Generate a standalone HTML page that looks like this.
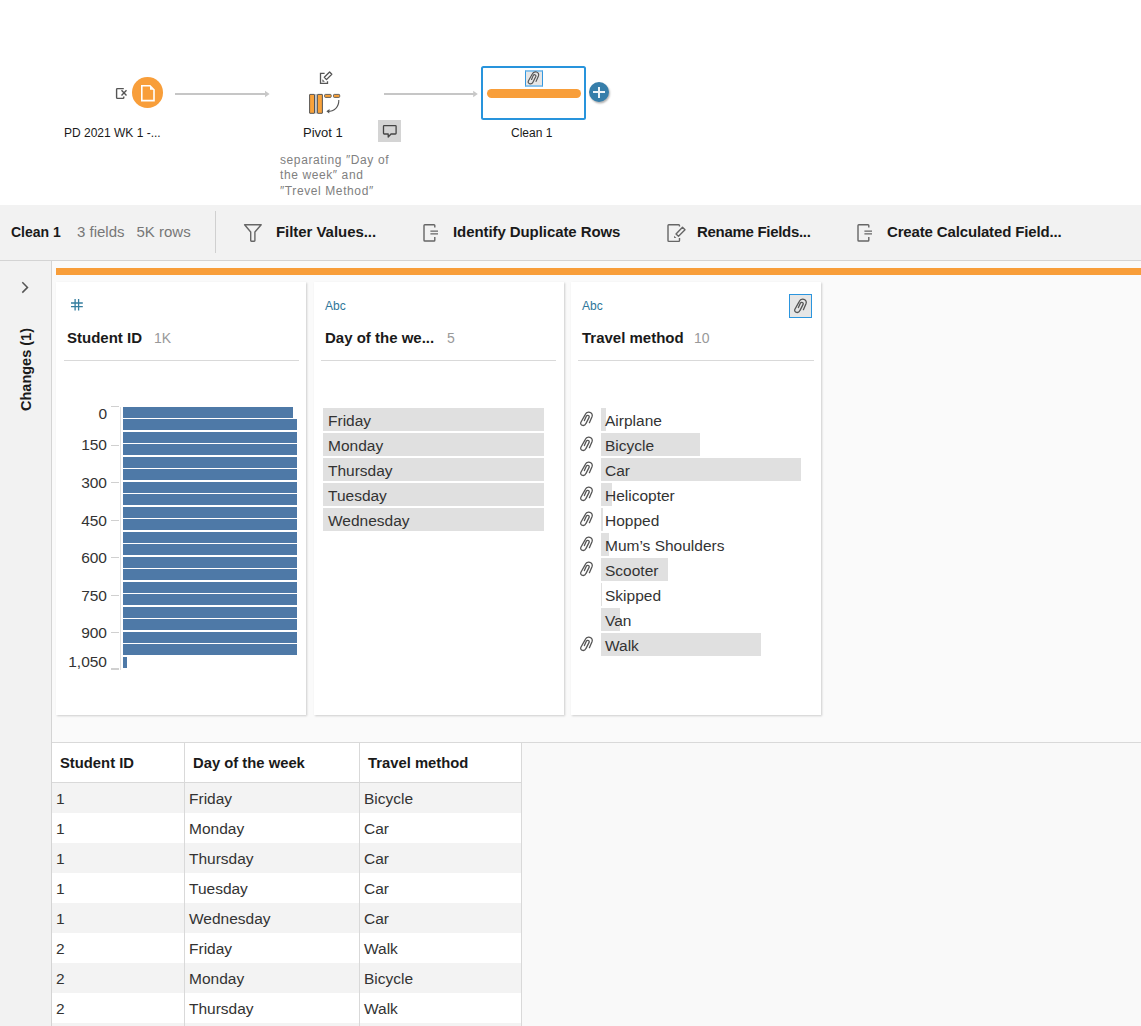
<!DOCTYPE html>
<html><head><meta charset="utf-8"><style>
html,body{margin:0;padding:0;width:1141px;height:1026px;overflow:hidden;background:#fff;position:relative;font-family:"Liberation Sans", sans-serif;}
.a{position:absolute;box-sizing:border-box;}
svg.a{overflow:visible}
.t{position:absolute;white-space:pre;font-family:"Liberation Sans", sans-serif;}
</style></head><body>
<div class="a" style="left:0px;top:0px;width:1141px;height:205px;background:#fff"></div>
<div class="a" style="left:0px;top:205px;width:1141px;height:55px;background:#f2f2f2"></div>
<div class="a" style="left:0px;top:260px;width:1141px;height:1px;background:#d4d4d4"></div>
<div class="a" style="left:0px;top:261px;width:51px;height:765px;background:#f2f2f2"></div>
<div class="a" style="left:51px;top:261px;width:1px;height:765px;background:#d4d4d4"></div>
<div class="a" style="left:52px;top:261px;width:1089px;height:481px;background:#fafafa"></div>
<div class="a" style="left:52px;top:742px;width:1089px;height:1px;background:#d9d9d9"></div>
<div class="a" style="left:52px;top:743px;width:1089px;height:283px;background:#f9f9f9"></div>
<svg class="a" style="left:112px;top:83px" width="20" height="20" viewBox="0 0 20 20"><path d="M11.8 5.6 H5.5 Q4.6 5.6 4.6 6.5 V14.5 Q4.6 15.4 5.5 15.4 H11 Q11.8 15.4 11.8 14.6 V13.6" fill="none" stroke="#555" stroke-width="1.4"/><path d="M9.5 7.3 L14.5 12.4 M14.5 7.3 L9.5 12.4" stroke="#555" stroke-width="1.4"/></svg>
<div class="a" style="left:131.5px;top:77.3px;width:31.6px;height:31.2px;background:#f89e3a;border-radius:50%"></div>
<svg class="a" style="left:140px;top:84px" width="16" height="18" viewBox="0 0 16 18"><path d="M1.8 1.8 H10 L14 5.8 V16.6 H1.8 Z" fill="none" stroke="#fff" stroke-width="1.6"/><path d="M10 1.8 L14 5.8 H10 Z" fill="#fff"/></svg>
<div class="a" style="left:175px;top:93px;width:91px;height:2px;background:#c6c6c6"></div>
<svg class="a" style="left:0;top:0" width="1" height="1"><path d="M265 90.8 L269.6 94 L265 97.2 Z" fill="#c8c8c8"/></svg>
<div class="t" style="left:64px;top:126.84px;font-size:12px;line-height:12px;font-weight:400;color:#1a1a1a;letter-spacing:0px;">PD 2021 WK 1 -...</div>
<svg class="a" style="left:315px;top:66px" width="22" height="22" viewBox="0 0 22 22"><path d="M9.6 7.4 H5.5 V17.4 H12.5 V15.3" fill="none" stroke="#555" stroke-width="1.3"/><path d="M9.3 11.3 L14.6 6 L16.8 8.3 L11.5 13.6 Z" fill="none" stroke="#555" stroke-width="1.3" stroke-linejoin="round"/><path d="M7.4 13.2 L7.4 15.7 L9.9 15.7 Z" fill="#555"/></svg>
<svg class="a" style="left:305px;top:90px" width="40" height="28" viewBox="0 0 40 28"><rect x="9.8" y="4" width="2.2" height="19.6" fill="#c5c8cc"/><rect x="4.6" y="4.4" width="4.9" height="18.9" rx="0.3" fill="#f9a23a" stroke="#555" stroke-width="1"/><rect x="12.4" y="4.4" width="5" height="18.9" rx="0.3" fill="#f9a23a" stroke="#555" stroke-width="1"/><rect x="19.6" y="4.4" width="6.6" height="3" rx="0.8" fill="#f9a23a" stroke="#555" stroke-width="0.9"/><rect x="28.5" y="4.4" width="6.2" height="3" rx="0.8" fill="#f9a23a" stroke="#555" stroke-width="0.9"/><path d="M33.8 10 C34 17 29.5 21.3 22.5 21.3" fill="none" stroke="#555" stroke-width="1.1"/><path d="M24.6 19 L21.4 21.3 L24.2 23.4 Z" fill="#555"/></svg>
<div class="t" style="left:303px;top:126.00px;font-size:13px;line-height:13px;font-weight:400;color:#1a1a1a;letter-spacing:0px;">Pivot 1</div>
<div class="a" style="left:378px;top:120px;width:23px;height:22px;background:#d4d4d4"></div>
<svg class="a" style="left:378px;top:120px" width="23" height="22" viewBox="0 0 23 22"><path d="M6.2 5.6 H17.4 Q18.1 5.6 18.1 6.3 V13.3 Q18.1 14 17.4 14 H13 L10.2 17 V14 H6.2 Q5.5 14 5.5 13.3 V6.3 Q5.5 5.6 6.2 5.6 Z" fill="none" stroke="#444" stroke-width="1.3" stroke-linejoin="round"/></svg>
<div class="t" style="left:280px;top:153.84px;font-size:12px;line-height:12px;font-weight:400;color:#808080;letter-spacing:0.6px;">separating ″Day of</div>
<div class="t" style="left:280px;top:169.34px;font-size:12px;line-height:12px;font-weight:400;color:#808080;letter-spacing:0.6px;">the week″ and</div>
<div class="t" style="left:280px;top:184.84px;font-size:12px;line-height:12px;font-weight:400;color:#808080;letter-spacing:0.6px;">″Trevel Method″</div>
<div class="a" style="left:384px;top:93px;width:90px;height:2px;background:#c6c6c6"></div>
<svg class="a" style="left:0;top:0" width="1" height="1"><path d="M473.2 90.8 L477.8 94 L473.2 97.2 Z" fill="#c8c8c8"/></svg>
<div class="a" style="left:481px;top:66.3px;width:105px;height:54px;border:2px solid #2894dc;border-radius:2.5px;background:#fff"></div>
<div class="a" style="left:487px;top:89px;width:94px;height:8.5px;background:#f89e3a;border-radius:4.5px"></div>
<div class="a" style="left:525.3px;top:69.8px;width:17.6px;height:17.7px;background:#e6e6e6;border:1px solid #3497de;border-top:2px solid #8cc4ec;border-bottom:2px solid #8cc4ec"></div>
<svg class="a" style="left:523.3px;top:68.3px" width="20" height="20" viewBox="0 0 22 22"><path d="M14.4 14.7 L17 8.8 C17.8 6.8 16.8 4.9 14.9 4.4 C13 3.9 11 4.8 10.2 6.6 L5.9 14.3 C5.2 15.8 6 17.1 7.6 17.4 C9 17.7 10.3 16.9 10.9 15.6 L14.1 9.4 C14.5 8.5 14 7.6 13.1 7.4 C12.3 7.2 11.6 7.7 11.2 8.4 L9.4 12.6" fill="none" stroke="#555" stroke-width="1.3" stroke-linecap="round" stroke-linejoin="round"/></svg>
<div class="t" style="left:511px;top:126.84px;font-size:12px;line-height:12px;font-weight:400;color:#1a1a1a;letter-spacing:0px;">Clean 1</div>
<div class="a" style="left:588.8px;top:82px;width:20.2px;height:20.2px;background:#367eaa;border-radius:50%;box-shadow:1px 1.5px 2px rgba(0,0,0,.3)"></div>
<div class="a" style="left:593px;top:91.4px;width:11.6px;height:1.8px;background:#eef4f8"></div>
<div class="a" style="left:598.3px;top:86.9px;width:1.6px;height:11.1px;background:#eef4f8"></div>
<div class="t" style="left:11px;top:224.85px;font-size:14px;line-height:14px;font-weight:700;color:#1a1a1a;letter-spacing:0px;">Clean 1</div>
<div class="t" style="left:77px;top:224.30px;font-size:15px;line-height:15px;font-weight:400;color:#777;letter-spacing:0px;">3 fields</div>
<div class="t" style="left:136.5px;top:224.30px;font-size:15px;line-height:15px;font-weight:400;color:#777;letter-spacing:0px;">5K rows</div>
<div class="a" style="left:215px;top:211px;width:1px;height:42px;background:#d0d0d0"></div>
<svg class="a" style="left:240px;top:220px" width="26" height="26" viewBox="0 0 26 26"><path d="M4.6 4.7 H21.2 L14.9 12 V20.6 Q14.9 21.3 14.2 21.3 H11.4 Q10.7 21.3 10.7 20.6 V12 Z" fill="none" stroke="#666" stroke-width="1.4" stroke-linejoin="round"/></svg>
<div class="t" style="left:276px;top:224.30px;font-size:15px;line-height:15px;font-weight:700;color:#1a1a1a;letter-spacing:-0.05px;">Filter Values...</div>
<svg class="a" style="left:418px;top:220px" width="26" height="26" viewBox="0 0 26 26"><path d="M16.8 7.6 V5.6 Q16.8 4.8 16 4.8 H6.8 Q6 4.8 6 5.6 V20.2 Q6 21 6.8 21 H16 Q16.8 21 16.8 20.2 V17" fill="none" stroke="#666" stroke-width="1.4"/><path d="M12.4 11.2 H20 M12.4 13.9 H20" stroke="#666" stroke-width="1.3"/></svg>
<div class="t" style="left:453px;top:224.30px;font-size:15px;line-height:15px;font-weight:700;color:#1a1a1a;letter-spacing:-0.08px;">Identify Duplicate Rows</div>
<svg class="a" style="left:663px;top:220px" width="26" height="26" viewBox="0 0 26 26"><path d="M16.5 6.5 V5.5 Q16.5 4.7 15.7 4.7 H5.8 Q5 4.7 5 5.5 V20.6 Q5 21.4 5.8 21.4 H15.7 Q16.5 21.4 16.5 20.6 V18" fill="none" stroke="#666" stroke-width="1.4"/><path d="M13 14 L19.5 7.3 L22 9.7 L15.5 16.3 Z" fill="none" stroke="#666" stroke-width="1.4" stroke-linejoin="round"/><path d="M11.1 15.8 L11.1 18.1 L13.4 18.1 Z" fill="#666"/></svg>
<div class="t" style="left:697px;top:224.30px;font-size:15px;line-height:15px;font-weight:700;color:#1a1a1a;letter-spacing:-0.3px;">Rename Fields...</div>
<svg class="a" style="left:852.3px;top:220px" width="26" height="26" viewBox="0 0 26 26"><path d="M16.8 7.6 V5.6 Q16.8 4.8 16 4.8 H6.8 Q6 4.8 6 5.6 V20.2 Q6 21 6.8 21 H16 Q16.8 21 16.8 20.2 V17" fill="none" stroke="#666" stroke-width="1.4"/><path d="M12.4 11.2 H20 M12.4 13.9 H20" stroke="#666" stroke-width="1.3"/></svg>
<div class="t" style="left:887px;top:224.30px;font-size:15px;line-height:15px;font-weight:700;color:#1a1a1a;letter-spacing:-0.15px;">Create Calculated Field...</div>
<svg class="a" style="left:0;top:0" width="1" height="1"><path d="M22.3 282.2 L27.5 287.4 L22.3 292.6" fill="none" stroke="#555" stroke-width="1.5"/></svg>
<div class="t" style="left:-14px;top:361.7px;width:80px;height:18px;font-size:14.5px;line-height:18px;font-weight:700;color:#1a1a1a;text-align:center;transform:rotate(-90deg)">Changes (1)</div>
<div class="a" style="left:56px;top:268px;width:1085px;height:7px;background:#f89e3a"></div>
<div class="a" style="left:56px;top:282px;width:250px;height:433px;background:#fff;box-shadow:1px 1px 2px rgba(0,0,0,.18)"></div>
<div class="a" style="left:314px;top:282px;width:249.5px;height:433px;background:#fff;box-shadow:1px 1px 2px rgba(0,0,0,.18)"></div>
<div class="a" style="left:571px;top:282px;width:250px;height:433px;background:#fff;box-shadow:1px 1px 2px rgba(0,0,0,.18)"></div>
<svg class="a" style="left:66px;top:294px" width="22" height="22" viewBox="0 0 22 22"><path d="M9.1 5 V16.6 M12.6 5 V16.6 M5 9 H16.8 M5 12.6 H16.8" stroke="#357e9f" stroke-width="1.3"/></svg>
<div class="t" style="left:67px;top:330.00px;font-size:15px;line-height:15px;font-weight:700;color:#1a1a1a;letter-spacing:0px;">Student ID</div>
<div class="t" style="left:154px;top:330.85px;font-size:14px;line-height:14px;font-weight:400;color:#999;letter-spacing:0px;">1K</div>
<div class="a" style="left:64px;top:360px;width:235px;height:1px;background:#d9d9d9"></div>
<div class="t" style="left:-13px;top:405.68px;width:120px;text-align:right;font-size:15.5px;line-height:15.5px;color:#333">0</div>
<div class="t" style="left:-13px;top:436.88px;width:120px;text-align:right;font-size:15.5px;line-height:15.5px;color:#333">150</div>
<div class="t" style="left:-13px;top:474.88px;width:120px;text-align:right;font-size:15.5px;line-height:15.5px;color:#333">300</div>
<div class="t" style="left:-13px;top:512.88px;width:120px;text-align:right;font-size:15.5px;line-height:15.5px;color:#333">450</div>
<div class="t" style="left:-13px;top:549.88px;width:120px;text-align:right;font-size:15.5px;line-height:15.5px;color:#333">600</div>
<div class="t" style="left:-13px;top:587.88px;width:120px;text-align:right;font-size:15.5px;line-height:15.5px;color:#333">750</div>
<div class="t" style="left:-13px;top:624.88px;width:120px;text-align:right;font-size:15.5px;line-height:15.5px;color:#333">900</div>
<div class="t" style="left:-13px;top:653.88px;width:120px;text-align:right;font-size:15.5px;line-height:15.5px;color:#333">1,050</div>
<div class="a" style="left:111px;top:406px;width:8px;height:1px;background:#d0d0d0"></div>
<div class="a" style="left:111px;top:445px;width:8px;height:1px;background:#d0d0d0"></div>
<div class="a" style="left:111px;top:482px;width:8px;height:1px;background:#d0d0d0"></div>
<div class="a" style="left:111px;top:520px;width:8px;height:1px;background:#d0d0d0"></div>
<div class="a" style="left:111px;top:557px;width:8px;height:1px;background:#d0d0d0"></div>
<div class="a" style="left:111px;top:595px;width:8px;height:1px;background:#d0d0d0"></div>
<div class="a" style="left:111px;top:632px;width:8px;height:1px;background:#d0d0d0"></div>
<div class="a" style="left:111px;top:668px;width:8px;height:2px;background:#d0d0d0"></div>
<div class="a" style="left:120px;top:407px;width:1px;height:263px;background:#e0e0e0"></div>
<div class="a" style="left:123px;top:407px;width:170px;height:11px;background:#4e79a7"></div>
<div class="a" style="left:123px;top:419px;width:174px;height:11px;background:#4e79a7"></div>
<div class="a" style="left:123px;top:432px;width:174px;height:11px;background:#4e79a7"></div>
<div class="a" style="left:123px;top:444px;width:174px;height:11px;background:#4e79a7"></div>
<div class="a" style="left:123px;top:457px;width:174px;height:11px;background:#4e79a7"></div>
<div class="a" style="left:123px;top:469px;width:174px;height:11px;background:#4e79a7"></div>
<div class="a" style="left:123px;top:482px;width:174px;height:11px;background:#4e79a7"></div>
<div class="a" style="left:123px;top:494px;width:174px;height:11px;background:#4e79a7"></div>
<div class="a" style="left:123px;top:507px;width:174px;height:11px;background:#4e79a7"></div>
<div class="a" style="left:123px;top:519px;width:174px;height:11px;background:#4e79a7"></div>
<div class="a" style="left:123px;top:532px;width:174px;height:11px;background:#4e79a7"></div>
<div class="a" style="left:123px;top:544px;width:174px;height:11px;background:#4e79a7"></div>
<div class="a" style="left:123px;top:557px;width:174px;height:11px;background:#4e79a7"></div>
<div class="a" style="left:123px;top:569px;width:174px;height:11px;background:#4e79a7"></div>
<div class="a" style="left:123px;top:582px;width:174px;height:11px;background:#4e79a7"></div>
<div class="a" style="left:123px;top:594px;width:174px;height:11px;background:#4e79a7"></div>
<div class="a" style="left:123px;top:607px;width:174px;height:11px;background:#4e79a7"></div>
<div class="a" style="left:123px;top:619px;width:174px;height:11px;background:#4e79a7"></div>
<div class="a" style="left:123px;top:632px;width:174px;height:11px;background:#4e79a7"></div>
<div class="a" style="left:123px;top:644px;width:174px;height:11px;background:#4e79a7"></div>
<div class="a" style="left:123px;top:657px;width:3.5px;height:11px;background:#4e79a7"></div>
<div class="t" style="left:325px;top:299.74px;font-size:12px;line-height:12px;font-weight:400;color:#2e7699;letter-spacing:0px;">Abc</div>
<div class="t" style="left:325px;top:330.00px;font-size:15px;line-height:15px;font-weight:700;color:#1a1a1a;letter-spacing:0px;">Day of the we...</div>
<div class="t" style="left:447px;top:330.85px;font-size:14px;line-height:14px;font-weight:400;color:#999;letter-spacing:0px;">5</div>
<div class="a" style="left:321px;top:360px;width:235px;height:1px;background:#d9d9d9"></div>
<div class="a" style="left:323px;top:408px;width:221px;height:23px;background:#e0e0e0"></div>
<div class="t" style="left:328px;top:413.38px;font-size:15.5px;line-height:15.5px;font-weight:400;color:#333;letter-spacing:0px;">Friday</div>
<div class="a" style="left:323px;top:433px;width:221px;height:23px;background:#e0e0e0"></div>
<div class="t" style="left:328px;top:438.38px;font-size:15.5px;line-height:15.5px;font-weight:400;color:#333;letter-spacing:0px;">Monday</div>
<div class="a" style="left:323px;top:458px;width:221px;height:23px;background:#e0e0e0"></div>
<div class="t" style="left:328px;top:463.38px;font-size:15.5px;line-height:15.5px;font-weight:400;color:#333;letter-spacing:0px;">Thursday</div>
<div class="a" style="left:323px;top:483px;width:221px;height:23px;background:#e0e0e0"></div>
<div class="t" style="left:328px;top:488.38px;font-size:15.5px;line-height:15.5px;font-weight:400;color:#333;letter-spacing:0px;">Tuesday</div>
<div class="a" style="left:323px;top:508px;width:221px;height:23px;background:#e0e0e0"></div>
<div class="t" style="left:328px;top:513.38px;font-size:15.5px;line-height:15.5px;font-weight:400;color:#333;letter-spacing:0px;">Wednesday</div>
<div class="t" style="left:582px;top:299.74px;font-size:12px;line-height:12px;font-weight:400;color:#2e7699;letter-spacing:0px;">Abc</div>
<div class="t" style="left:582px;top:330.00px;font-size:15px;line-height:15px;font-weight:700;color:#1a1a1a;letter-spacing:0px;">Travel method</div>
<div class="t" style="left:694px;top:330.85px;font-size:14px;line-height:14px;font-weight:400;color:#999;letter-spacing:0px;">10</div>
<div class="a" style="left:578px;top:360px;width:236px;height:1px;background:#d9d9d9"></div>
<div class="a" style="left:789px;top:294px;width:23px;height:24px;border:1.5px solid #2b95de;background:#e6e6e6;box-sizing:border-box"></div>
<svg class="a" style="left:788.7px;top:294.9px" width="22" height="22" viewBox="0 0 22 22"><path d="M14.4 14.7 L17 8.8 C17.8 6.8 16.8 4.9 14.9 4.4 C13 3.9 11 4.8 10.2 6.6 L5.9 14.3 C5.2 15.8 6 17.1 7.6 17.4 C9 17.7 10.3 16.9 10.9 15.6 L14.1 9.4 C14.5 8.5 14 7.6 13.1 7.4 C12.3 7.2 11.6 7.7 11.2 8.4 L9.4 12.6" fill="none" stroke="#555" stroke-width="1.3" stroke-linecap="round" stroke-linejoin="round"/></svg>
<div class="a" style="left:601px;top:408px;width:5px;height:23px;background:#e0e0e0"></div>
<svg class="a" style="left:575px;top:408px" width="22" height="22" viewBox="0 0 22 22"><path d="M14.4 14.7 L17 8.8 C17.8 6.8 16.8 4.9 14.9 4.4 C13 3.9 11 4.8 10.2 6.6 L5.9 14.3 C5.2 15.8 6 17.1 7.6 17.4 C9 17.7 10.3 16.9 10.9 15.6 L14.1 9.4 C14.5 8.5 14 7.6 13.1 7.4 C12.3 7.2 11.6 7.7 11.2 8.4 L9.4 12.6" fill="none" stroke="#555" stroke-width="1.3" stroke-linecap="round" stroke-linejoin="round"/></svg>
<div class="t" style="left:605px;top:413.38px;font-size:15.5px;line-height:15.5px;font-weight:400;color:#333;letter-spacing:0px;">Airplane</div>
<div class="a" style="left:601px;top:433px;width:99px;height:23px;background:#e0e0e0"></div>
<svg class="a" style="left:575px;top:433px" width="22" height="22" viewBox="0 0 22 22"><path d="M14.4 14.7 L17 8.8 C17.8 6.8 16.8 4.9 14.9 4.4 C13 3.9 11 4.8 10.2 6.6 L5.9 14.3 C5.2 15.8 6 17.1 7.6 17.4 C9 17.7 10.3 16.9 10.9 15.6 L14.1 9.4 C14.5 8.5 14 7.6 13.1 7.4 C12.3 7.2 11.6 7.7 11.2 8.4 L9.4 12.6" fill="none" stroke="#555" stroke-width="1.3" stroke-linecap="round" stroke-linejoin="round"/></svg>
<div class="t" style="left:605px;top:438.38px;font-size:15.5px;line-height:15.5px;font-weight:400;color:#333;letter-spacing:0px;">Bicycle</div>
<div class="a" style="left:601px;top:458px;width:200px;height:23px;background:#e0e0e0"></div>
<svg class="a" style="left:575px;top:458px" width="22" height="22" viewBox="0 0 22 22"><path d="M14.4 14.7 L17 8.8 C17.8 6.8 16.8 4.9 14.9 4.4 C13 3.9 11 4.8 10.2 6.6 L5.9 14.3 C5.2 15.8 6 17.1 7.6 17.4 C9 17.7 10.3 16.9 10.9 15.6 L14.1 9.4 C14.5 8.5 14 7.6 13.1 7.4 C12.3 7.2 11.6 7.7 11.2 8.4 L9.4 12.6" fill="none" stroke="#555" stroke-width="1.3" stroke-linecap="round" stroke-linejoin="round"/></svg>
<div class="t" style="left:605px;top:463.38px;font-size:15.5px;line-height:15.5px;font-weight:400;color:#333;letter-spacing:0px;">Car</div>
<div class="a" style="left:601px;top:483px;width:11px;height:23px;background:#e0e0e0"></div>
<svg class="a" style="left:575px;top:483px" width="22" height="22" viewBox="0 0 22 22"><path d="M14.4 14.7 L17 8.8 C17.8 6.8 16.8 4.9 14.9 4.4 C13 3.9 11 4.8 10.2 6.6 L5.9 14.3 C5.2 15.8 6 17.1 7.6 17.4 C9 17.7 10.3 16.9 10.9 15.6 L14.1 9.4 C14.5 8.5 14 7.6 13.1 7.4 C12.3 7.2 11.6 7.7 11.2 8.4 L9.4 12.6" fill="none" stroke="#555" stroke-width="1.3" stroke-linecap="round" stroke-linejoin="round"/></svg>
<div class="t" style="left:605px;top:488.38px;font-size:15.5px;line-height:15.5px;font-weight:400;color:#333;letter-spacing:0px;">Helicopter</div>
<div class="a" style="left:601px;top:508px;width:1.5px;height:23px;background:#e0e0e0"></div>
<svg class="a" style="left:575px;top:508px" width="22" height="22" viewBox="0 0 22 22"><path d="M14.4 14.7 L17 8.8 C17.8 6.8 16.8 4.9 14.9 4.4 C13 3.9 11 4.8 10.2 6.6 L5.9 14.3 C5.2 15.8 6 17.1 7.6 17.4 C9 17.7 10.3 16.9 10.9 15.6 L14.1 9.4 C14.5 8.5 14 7.6 13.1 7.4 C12.3 7.2 11.6 7.7 11.2 8.4 L9.4 12.6" fill="none" stroke="#555" stroke-width="1.3" stroke-linecap="round" stroke-linejoin="round"/></svg>
<div class="t" style="left:605px;top:513.38px;font-size:15.5px;line-height:15.5px;font-weight:400;color:#333;letter-spacing:0px;">Hopped</div>
<div class="a" style="left:601px;top:533px;width:8px;height:23px;background:#e0e0e0"></div>
<svg class="a" style="left:575px;top:533px" width="22" height="22" viewBox="0 0 22 22"><path d="M14.4 14.7 L17 8.8 C17.8 6.8 16.8 4.9 14.9 4.4 C13 3.9 11 4.8 10.2 6.6 L5.9 14.3 C5.2 15.8 6 17.1 7.6 17.4 C9 17.7 10.3 16.9 10.9 15.6 L14.1 9.4 C14.5 8.5 14 7.6 13.1 7.4 C12.3 7.2 11.6 7.7 11.2 8.4 L9.4 12.6" fill="none" stroke="#555" stroke-width="1.3" stroke-linecap="round" stroke-linejoin="round"/></svg>
<div class="t" style="left:605px;top:538.38px;font-size:15.5px;line-height:15.5px;font-weight:400;color:#333;letter-spacing:0px;">Mum’s Shoulders</div>
<div class="a" style="left:601px;top:558px;width:67px;height:23px;background:#e0e0e0"></div>
<svg class="a" style="left:575px;top:558px" width="22" height="22" viewBox="0 0 22 22"><path d="M14.4 14.7 L17 8.8 C17.8 6.8 16.8 4.9 14.9 4.4 C13 3.9 11 4.8 10.2 6.6 L5.9 14.3 C5.2 15.8 6 17.1 7.6 17.4 C9 17.7 10.3 16.9 10.9 15.6 L14.1 9.4 C14.5 8.5 14 7.6 13.1 7.4 C12.3 7.2 11.6 7.7 11.2 8.4 L9.4 12.6" fill="none" stroke="#555" stroke-width="1.3" stroke-linecap="round" stroke-linejoin="round"/></svg>
<div class="t" style="left:605px;top:563.38px;font-size:15.5px;line-height:15.5px;font-weight:400;color:#333;letter-spacing:0px;">Scooter</div>
<div class="a" style="left:601px;top:583px;width:1px;height:23px;background:#e0e0e0"></div>
<div class="t" style="left:605px;top:588.38px;font-size:15.5px;line-height:15.5px;font-weight:400;color:#333;letter-spacing:0px;">Skipped</div>
<div class="a" style="left:601px;top:608px;width:18.5px;height:23px;background:#e0e0e0"></div>
<div class="t" style="left:605px;top:613.38px;font-size:15.5px;line-height:15.5px;font-weight:400;color:#333;letter-spacing:0px;">Van</div>
<div class="a" style="left:601px;top:633px;width:160px;height:23px;background:#e0e0e0"></div>
<svg class="a" style="left:575px;top:633px" width="22" height="22" viewBox="0 0 22 22"><path d="M14.4 14.7 L17 8.8 C17.8 6.8 16.8 4.9 14.9 4.4 C13 3.9 11 4.8 10.2 6.6 L5.9 14.3 C5.2 15.8 6 17.1 7.6 17.4 C9 17.7 10.3 16.9 10.9 15.6 L14.1 9.4 C14.5 8.5 14 7.6 13.1 7.4 C12.3 7.2 11.6 7.7 11.2 8.4 L9.4 12.6" fill="none" stroke="#555" stroke-width="1.3" stroke-linecap="round" stroke-linejoin="round"/></svg>
<div class="t" style="left:605px;top:638.38px;font-size:15.5px;line-height:15.5px;font-weight:400;color:#333;letter-spacing:0px;">Walk</div>
<div class="a" style="left:52px;top:743px;width:469px;height:283px;background:#fff"></div>
<div class="a" style="left:52px;top:782px;width:469px;height:1px;background:#d9d9d9"></div>
<div class="a" style="left:52px;top:1023px;width:469px;height:3px;background:#f3f3f3"></div>
<div class="a" style="left:52px;top:783px;width:469px;height:30px;background:#f3f3f3"></div>
<div class="t" style="left:56px;top:790.68px;font-size:15.5px;line-height:15.5px;font-weight:400;color:#333;letter-spacing:0px;">1</div>
<div class="t" style="left:189px;top:790.68px;font-size:15.5px;line-height:15.5px;font-weight:400;color:#333;letter-spacing:0px;">Friday</div>
<div class="t" style="left:364px;top:790.68px;font-size:15.5px;line-height:15.5px;font-weight:400;color:#333;letter-spacing:0px;">Bicycle</div>
<div class="t" style="left:56px;top:820.68px;font-size:15.5px;line-height:15.5px;font-weight:400;color:#333;letter-spacing:0px;">1</div>
<div class="t" style="left:189px;top:820.68px;font-size:15.5px;line-height:15.5px;font-weight:400;color:#333;letter-spacing:0px;">Monday</div>
<div class="t" style="left:364px;top:820.68px;font-size:15.5px;line-height:15.5px;font-weight:400;color:#333;letter-spacing:0px;">Car</div>
<div class="a" style="left:52px;top:843px;width:469px;height:30px;background:#f3f3f3"></div>
<div class="t" style="left:56px;top:850.68px;font-size:15.5px;line-height:15.5px;font-weight:400;color:#333;letter-spacing:0px;">1</div>
<div class="t" style="left:189px;top:850.68px;font-size:15.5px;line-height:15.5px;font-weight:400;color:#333;letter-spacing:0px;">Thursday</div>
<div class="t" style="left:364px;top:850.68px;font-size:15.5px;line-height:15.5px;font-weight:400;color:#333;letter-spacing:0px;">Car</div>
<div class="t" style="left:56px;top:880.68px;font-size:15.5px;line-height:15.5px;font-weight:400;color:#333;letter-spacing:0px;">1</div>
<div class="t" style="left:189px;top:880.68px;font-size:15.5px;line-height:15.5px;font-weight:400;color:#333;letter-spacing:0px;">Tuesday</div>
<div class="t" style="left:364px;top:880.68px;font-size:15.5px;line-height:15.5px;font-weight:400;color:#333;letter-spacing:0px;">Car</div>
<div class="a" style="left:52px;top:903px;width:469px;height:30px;background:#f3f3f3"></div>
<div class="t" style="left:56px;top:910.68px;font-size:15.5px;line-height:15.5px;font-weight:400;color:#333;letter-spacing:0px;">1</div>
<div class="t" style="left:189px;top:910.68px;font-size:15.5px;line-height:15.5px;font-weight:400;color:#333;letter-spacing:0px;">Wednesday</div>
<div class="t" style="left:364px;top:910.68px;font-size:15.5px;line-height:15.5px;font-weight:400;color:#333;letter-spacing:0px;">Car</div>
<div class="t" style="left:56px;top:940.68px;font-size:15.5px;line-height:15.5px;font-weight:400;color:#333;letter-spacing:0px;">2</div>
<div class="t" style="left:189px;top:940.68px;font-size:15.5px;line-height:15.5px;font-weight:400;color:#333;letter-spacing:0px;">Friday</div>
<div class="t" style="left:364px;top:940.68px;font-size:15.5px;line-height:15.5px;font-weight:400;color:#333;letter-spacing:0px;">Walk</div>
<div class="a" style="left:52px;top:963px;width:469px;height:30px;background:#f3f3f3"></div>
<div class="t" style="left:56px;top:970.68px;font-size:15.5px;line-height:15.5px;font-weight:400;color:#333;letter-spacing:0px;">2</div>
<div class="t" style="left:189px;top:970.68px;font-size:15.5px;line-height:15.5px;font-weight:400;color:#333;letter-spacing:0px;">Monday</div>
<div class="t" style="left:364px;top:970.68px;font-size:15.5px;line-height:15.5px;font-weight:400;color:#333;letter-spacing:0px;">Bicycle</div>
<div class="t" style="left:56px;top:1000.68px;font-size:15.5px;line-height:15.5px;font-weight:400;color:#333;letter-spacing:0px;">2</div>
<div class="t" style="left:189px;top:1000.68px;font-size:15.5px;line-height:15.5px;font-weight:400;color:#333;letter-spacing:0px;">Thursday</div>
<div class="t" style="left:364px;top:1000.68px;font-size:15.5px;line-height:15.5px;font-weight:400;color:#333;letter-spacing:0px;">Walk</div>
<div class="a" style="left:184px;top:743px;width:1px;height:283px;background:#d9d9d9"></div>
<div class="a" style="left:359px;top:743px;width:1px;height:283px;background:#d9d9d9"></div>
<div class="a" style="left:521px;top:743px;width:1px;height:283px;background:#d9d9d9"></div>
<div class="t" style="left:60px;top:755.77px;font-size:14.8px;line-height:14.8px;font-weight:700;color:#1a1a1a;letter-spacing:0px;">Student ID</div>
<div class="t" style="left:193px;top:755.77px;font-size:14.8px;line-height:14.8px;font-weight:700;color:#1a1a1a;letter-spacing:0px;">Day of the week</div>
<div class="t" style="left:368px;top:755.77px;font-size:14.8px;line-height:14.8px;font-weight:700;color:#1a1a1a;letter-spacing:0px;">Travel method</div>
</body></html>
